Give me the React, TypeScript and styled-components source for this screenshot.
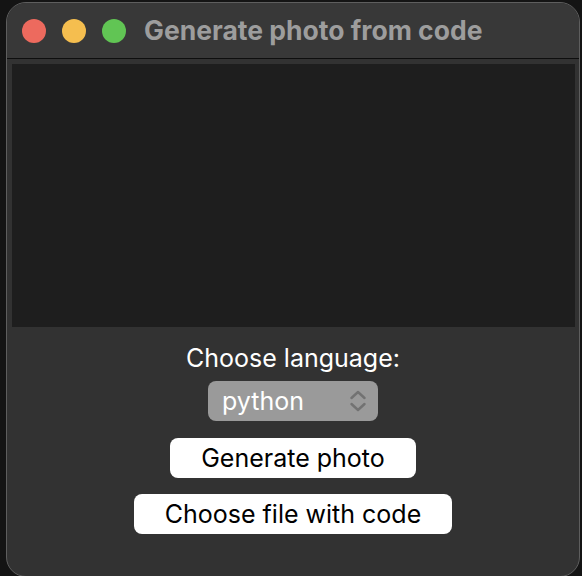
import React from 'react';
import styled, { createGlobalStyle } from 'styled-components';

const GlobalStyle = createGlobalStyle`
  html, body {
    margin: 0;
    padding: 0;
    background: #141414;
  }
  body {
    font-family: Inter, "Liberation Sans", sans-serif;
  }
`;

const Page = styled.div`
  width: 582px;
  height: 576px;
  box-sizing: border-box;
  padding: 2px 2px 0 6px;
  overflow: hidden;
`;

const Window = styled.div`
  height: 575px;
  box-sizing: border-box;
  border: 1px solid #5e5e5e;
  border-radius: 20px;
  background: #323232;
  display: flex;
  flex-direction: column;
  overflow: hidden;
`;

const TitleBar = styled.div`
  height: 55px;
  flex-shrink: 0;
  background: #383838;
  border-bottom: 1px solid #0e0e0e;
  display: flex;
  align-items: center;
  padding-left: 15px;
`;

const Light = styled.span<{ $color: string }>`
  width: 24px;
  height: 24px;
  border-radius: 50%;
  background: ${(p) => p.$color};
  margin-right: 16px;
`;

const Title = styled.h1`
  margin: 0 0 2px 2px;
  font-size: 26.5px;
  font-weight: 700;
  color: #9d9d9d;
`;

const Body = styled.div`
  padding: 5px 5px 0 5px;
  display: flex;
  flex-direction: column;
`;

const Canvas = styled.div`
  height: 263px;
  margin-right: -1px;
  background: #1e1e1e;
`;

const Controls = styled.div`
  display: flex;
  flex-direction: column;
  align-items: center;
  padding-top: 16px;
`;

const Label = styled.div`
  font-size: 25px;
  line-height: 30px;
  color: #ffffff;
  margin-bottom: 8px;
`;

const Select = styled.div`
  width: 170px;
  height: 40px;
  box-sizing: border-box;
  border-radius: 8px;
  background: #9a9a9a;
  display: flex;
  align-items: center;
  justify-content: space-between;
  padding: 0 12px 0 14px;
  color: #ffffff;
  font-size: 25px;
  margin-bottom: 17px;
`;

const Button = styled.button<{ $width: number }>`
  width: ${(p) => p.$width}px;
  height: 40px;
  border: none;
  border-radius: 8px;
  background: #ffffff;
  color: #000000;
  font-family: Inter, "Liberation Sans", sans-serif;
  font-size: 25px;
  padding: 0;
  margin-bottom: 16px;
`;

const Chevrons = () => (
  <svg width="16" height="22" viewBox="0 0 16 22" fill="none">
    <path d="M1.5 8 L8 2 L14.5 8" stroke="#727272" strokeWidth="2.4" strokeLinecap="round" strokeLinejoin="round" />
    <path d="M1.5 14 L8 20 L14.5 14" stroke="#727272" strokeWidth="2.4" strokeLinecap="round" strokeLinejoin="round" />
  </svg>
);

export default function App() {
  return (
    <>
      <GlobalStyle />
      <Page>
        <Window>
          <TitleBar>
            <Light $color="#ed6a5e" />
            <Light $color="#f5be4f" />
            <Light $color="#61c554" />
            <Title>Generate photo from code</Title>
          </TitleBar>
          <Body>
            <Canvas />
            <Controls>
              <Label>Choose language:</Label>
              <Select>
                <span>python</span>
                <Chevrons />
              </Select>
              <Button $width={246}>Generate photo</Button>
              <Button $width={318}>Choose file with code</Button>
            </Controls>
          </Body>
        </Window>
      </Page>
    </>
  );
}
